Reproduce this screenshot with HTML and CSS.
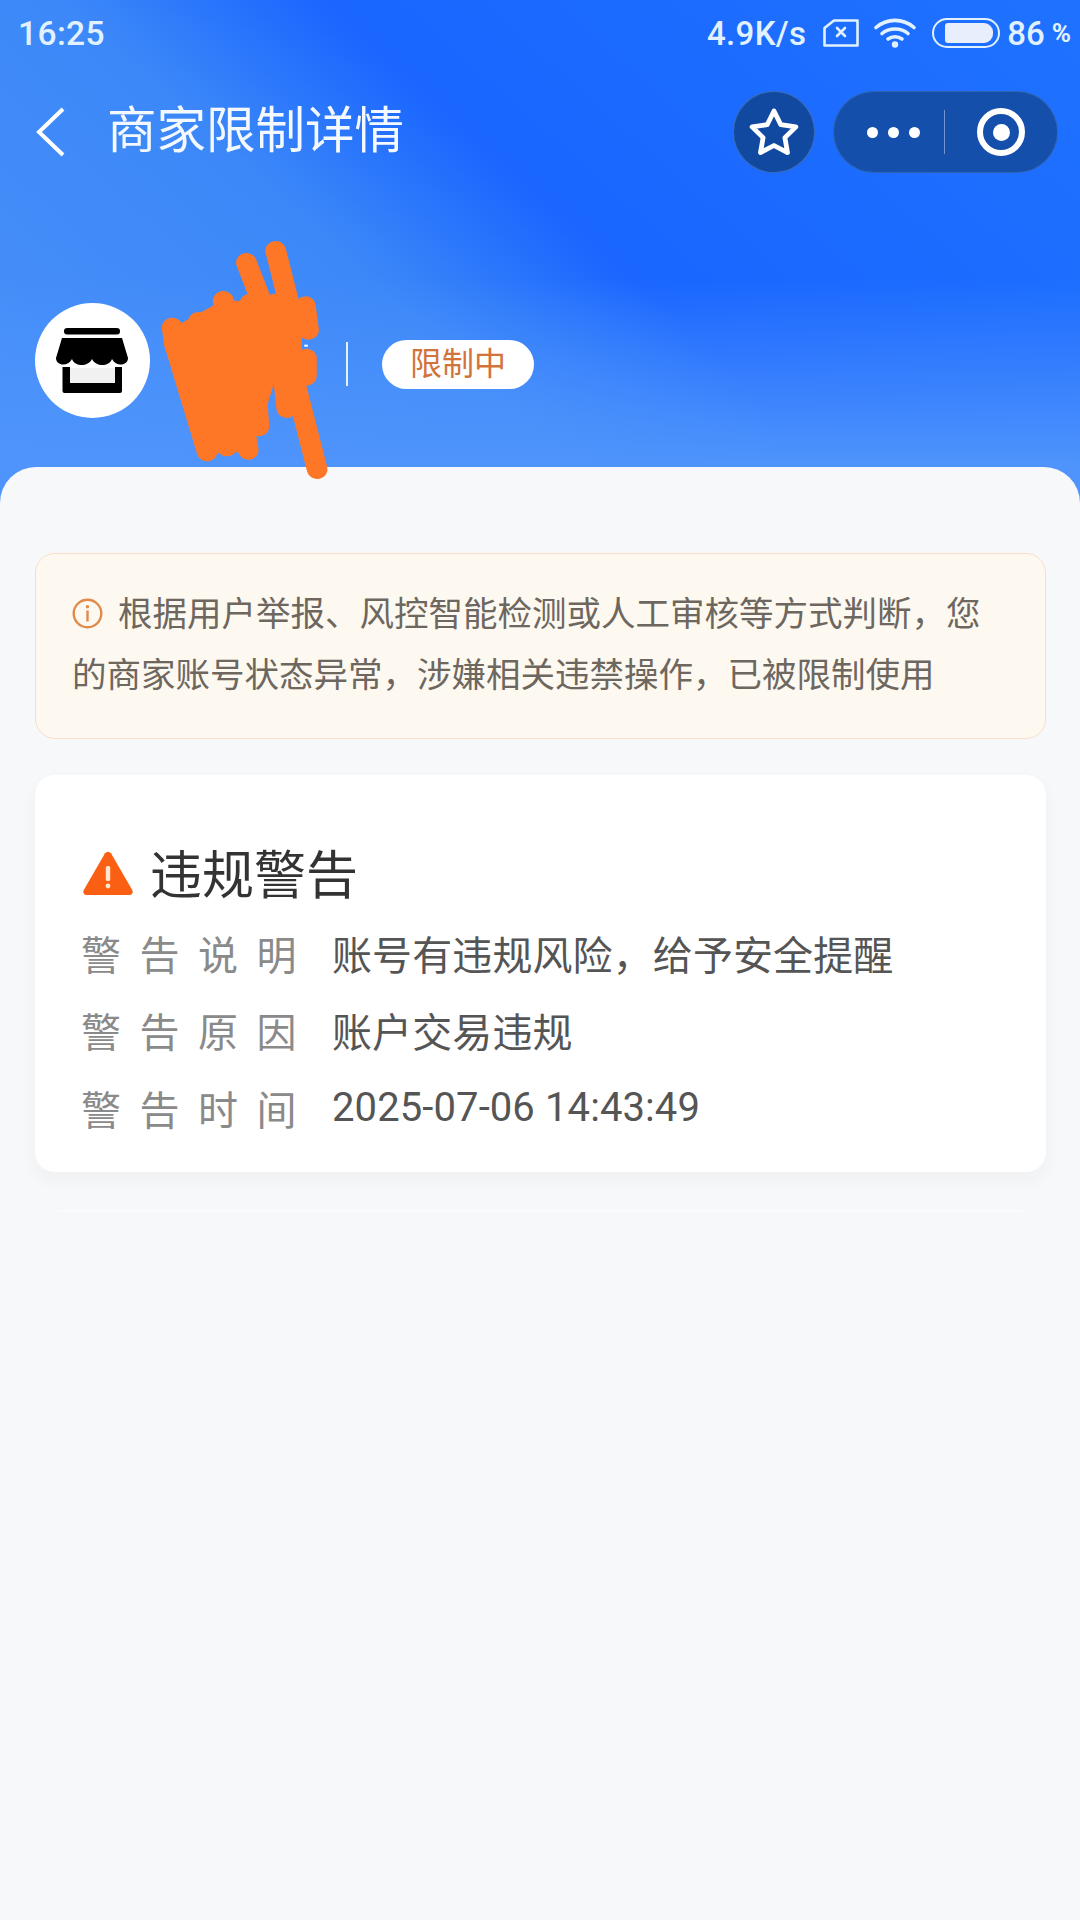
FILE: index.html
```html
<!DOCTYPE html>
<html lang="zh-CN">
<head>
    <meta charset="UTF-8">
    <meta name="viewport" content="width=device-width, initial-scale=1.0">
    <title>商家限制详情</title>
    <link rel="stylesheet" href="styles.css">
</head>
<body>
    <div class="page">
        <div class="top">
            <!-- 状态栏 -->
            <div class="status-bar">
                <div class="time">16:25</div>
                <div class="status-right">
                    <span class="speed">4.9K/s</span>
                    <svg class="sim" width="36" height="28" viewBox="0 0 36 28">
                        <path d="M11 1.5H34.5V26.5H1.5V9Z" fill="none" stroke="#e2f1ff" stroke-width="2.6" stroke-linejoin="round"/>
                        <path d="M14 9L22 17M22 9L14 17" stroke="#e2f1ff" stroke-width="2.6" stroke-linecap="round"/>
                    </svg>
                    <svg class="wifi" width="42" height="30" viewBox="0 0 42 30">
                        <path d="M2 9.5C13 0 29 0 40 9.5" fill="none" stroke="#e2f1ff" stroke-width="3.6" stroke-linecap="round"/>
                        <path d="M8 15.5C15 9.5 27 9.5 34 15.5" fill="none" stroke="#e2f1ff" stroke-width="3.6" stroke-linecap="round"/>
                        <path d="M14 21C18 18 24 18 28 21" fill="none" stroke="#e2f1ff" stroke-width="3.6" stroke-linecap="round"/>
                        <circle cx="21" cy="26.5" r="3.2" fill="#e2f1ff"/>
                    </svg>
                    <div class="battery"><div class="battery-fill"></div></div>
                    <span class="percent">86</span>
                    <span class="percent-sign">%</span>
                </div>
            </div>

            <!-- 导航 -->
            <div class="nav">
                <svg class="back" width="30" height="50" viewBox="0 0 30 50">
                    <path d="M27 2L3 25L27 48" fill="none" stroke="#fff" stroke-width="4"/>
                </svg>
                <div class="nav-title">商家限制详情</div>
                <div class="star-btn">
                    <svg width="54" height="54" viewBox="-27 -29 54 54">
                        <polygon points="0,-23 6.8,-9.3 21.9,-7.1 10.9,3.6 13.5,18.6 0,11.5 -13.5,18.6 -10.9,3.6 -21.9,-7.1 -6.8,-9.3" fill="none" stroke="#fff" stroke-width="4.8" stroke-linejoin="round"/>
                    </svg>
                </div>
                <div class="capsule">
                    <div class="dots"><span></span><span></span><span></span></div>
                    <div class="capsule-line"></div>
                    <div class="target"><div class="target-dot"></div></div>
                </div>
            </div>

            <!-- 商家信息 -->
            <div class="store-row">
                <div class="avatar">
                    <svg width="115" height="115" viewBox="35 303 115 115">
                        <rect x="64" y="328" width="56" height="6.5" rx="3.2" fill="#000"/>
                        <path d="M62 338H122L128 358C128 366 116 367 112 359C109 367 96 367 92 359C88 367 75 367 72 359C68 367 56 366 56 358Z" fill="#000"/>
                        <path d="M62.5 367H70V383H115V367H122V391Q122 393 120 393H64.5Q62.5 393 62.5 391Z" fill="#000"/>
                        <rect x="70" y="368" width="45" height="15" fill="#f1f1f1"/>
                    </svg>
                </div>
                <div class="store-name"></div>
                <div class="store-line"></div>
                <div class="store-tag">限制中</div>
            </div>
        </div>

        <div class="sheet">
            <div class="notice">
                <svg class="notice-icon" width="31" height="31" viewBox="0 0 31 31">
                    <circle cx="15.5" cy="15.5" r="13.8" fill="none" stroke="#e08a4c" stroke-width="2.4"/>
                    <circle cx="15.5" cy="8.8" r="1.7" fill="#e08a4c"/>
                    <rect x="14.3" y="12.5" width="2.4" height="11" fill="#e08a4c"/>
                </svg>根据用户举报、风控智能检测或人工审核等方式判断，您的商家账号状态异常，涉嫌相关违禁操作，已被限制使用
            </div>

            <div class="card">
                <div class="card-title">
                    <svg width="50" height="44" viewBox="0 0 50 44">
                        <path d="M22 2.2Q25 -0.8 28 2.2L49.5 39.5Q50.5 44 46 44H4Q-0.5 44 0.5 39.5Z" fill="#fa5f14"/>
                        <rect x="22.8" y="15" width="4.4" height="15" rx="1.6" fill="#ffe6cf"/>
                        <circle cx="25" cy="35" r="2.4" fill="#ffe6cf"/>
                    </svg>
                    <span>违规警告</span>
                </div>
                <div class="info-row">
                    <div class="info-label">警告说明</div>
                    <div class="info-value">账号有违规风险，给予安全提醒</div>
                </div>
                <div class="info-row">
                    <div class="info-label">警告原因</div>
                    <div class="info-value">账户交易违规</div>
                </div>
                <div class="info-row">
                    <div class="info-label">警告时间</div>
                    <div class="info-value">2025-07-06 14:43:49</div>
                </div>
            </div>
            <div class="card-foot"></div>
        </div>

        <!-- 涂抹遮挡 -->
        <svg class="scribble" width="560" height="260" viewBox="0 0 1568 780" preserveAspectRatio="none">
            <polygon points="490,290 625,210 845,225 845,440 770,450 730,590 695,665 580,670" fill="#fd7726"/>
            <g fill="none" stroke="#fd7726" stroke-width="58" stroke-linecap="round">
                <path d="M772 62L828 300"/>
                <path d="M690 98L745 250"/>
                <path d="M812 400L888 718"/>
                <path d="M482 292L488 340L580 665"/>
                <path d="M555 275L635 650"/>
                <path d="M625 212L695 660"/>
                <path d="M700 220L725 590"/>
                <path d="M770 220L803 535"/>
                <path d="M855 228L864 300"/>
                <path d="M858 385L858 438"/>
            </g>
            <rect x="852" y="344" width="10" height="6" fill="#fff"/>
        </svg>
    </div>
</body>
</html>
```

FILE: styles.css
```css
body {
    margin: 0;
    background-color: #f7f8f9;
    font-family: Roboto, "Noto Sans CJK SC", sans-serif;
}
.page {
    position: relative;
    height: 1920px;
    overflow: hidden;
    background-color: #f7f8f9;
}
.top {
    height: 467px;
    margin-bottom: -40px;
    padding-bottom: 40px;
    background:
        linear-gradient(to bottom, rgba(79, 148, 252, 0) 55%, #4f94fc 92%),
        linear-gradient(222deg, #1f72ff 0%, #1a66ff 46%, #3c88f8 62%, #4a91fa 100%);
}

/* 状态栏 */
.status-bar {
    height: 66px;
    display: flex;
    justify-content: space-between;
    align-items: center;
    padding: 0 9px 0 18px;
    color: #e2f1ff;
    font-weight: 500;
}
.time {
    font-size: 33.5px;
    letter-spacing: 0.4px;
}
.status-right {
    display: flex;
    align-items: center;
}
.speed {
    font-size: 33px;
    letter-spacing: 0.3px;
}
.sim {
    margin-left: 17px;
}
.wifi {
    margin-left: 15px;
}
.battery {
    width: 68px;
    height: 30px;
    box-sizing: border-box;
    margin-left: 16px;
    padding: 3px;
    border: 2.6px solid #e2f1ff;
    border-radius: 15px;
}
.battery-fill {
    width: 48px;
    height: 100%;
    margin-left: 8px;
    background-color: #e8eefc;
    border-radius: 3px 9px 9px 3px;
}
.percent {
    margin-left: 7px;
    font-size: 33px;
}
.percent-sign {
    margin-left: 7px;
    font-size: 26px;
    font-weight: 700;
}

/* 导航 */
.nav {
    display: flex;
    align-items: center;
    height: 82px;
    margin-top: 25px;
    padding: 0 22px 0 36px;
}
.back {
    margin-right: 41px;
}
.nav-title {
    flex: 1;
    font-size: 49.5px;
    line-height: 76px;
    margin-bottom: 2px;
    color: #f4f9ff;
}
.star-btn {
    width: 82px;
    height: 82px;
    display: flex;
    justify-content: center;
    align-items: center;
    margin-right: 18px;
    box-sizing: border-box;
    background-color: #10499f;
    border: 1px solid rgba(255, 255, 255, 0.18);
    border-radius: 50%;
}
.capsule {
    width: 225px;
    height: 82px;
    display: flex;
    align-items: center;
    box-sizing: border-box;
    background-color: #134fab;
    border: 1px solid rgba(255, 255, 255, 0.12);
    border-radius: 41px;
}
.dots {
    display: flex;
    gap: 10px;
    width: 110px;
    justify-content: center;
    padding-left: 8px;
    box-sizing: border-box;
}
.dots span {
    width: 11px;
    height: 11px;
    background-color: #fff;
    border-radius: 50%;
}
.capsule-line {
    width: 1px;
    height: 44px;
    background-color: rgba(255, 255, 255, 0.4);
}
.target {
    width: 48px;
    height: 48px;
    display: flex;
    justify-content: center;
    align-items: center;
    margin-left: 32px;
    box-sizing: border-box;
    border: 6px solid #fff;
    border-radius: 50%;
}
.target-dot {
    width: 17px;
    height: 17px;
    background-color: #fff;
    border-radius: 50%;
}

/* 商家信息 */
.store-row {
    display: flex;
    align-items: center;
    margin-top: 130px;
    padding-left: 35px;
}
.avatar {
    width: 115px;
    height: 115px;
    background-color: #fff;
    border-radius: 50%;
}
.store-name {
    width: 196px;
}
.store-line {
    width: 2px;
    height: 44px;
    margin-top: 6px;
    background-color: #e6f1ff;
}
.store-tag {
    width: 152px;
    height: 49px;
    margin-top: 7px;
    margin-left: 34px;
    text-align: center;
    line-height: 49px;
    font-size: 32px;
    color: #d2733a;
    background-color: #fff;
    border-radius: 25px;
}

/* 内容区 */
.sheet {
    position: relative;
    padding: 86px 34px 0 35px;
    background-color: #f7f8f9;
    border-radius: 36px 36px 0 0;
    height: 1453px;
    box-sizing: border-box;
}
.notice {
    height: 186px;
    box-sizing: border-box;
    padding: 30px 36px 0;
    font-size: 34.5px;
    line-height: 61px;
    color: #6d6760;
    background-color: #fef9f0;
    border: 1.5px solid #fbdcc8;
    border-radius: 20px;
}
.notice-icon {
    margin-right: 15px;
    vertical-align: -3px;
}
.card {
    margin-top: 36px;
    padding: 66px 48px 25px;
    background-color: #fff;
    border-radius: 20px;
    box-shadow: 0 8px 18px rgba(30, 40, 60, 0.04);
}
.card-title {
    display: flex;
    align-items: center;
    gap: 17px;
    height: 60px;
    margin-bottom: 13px;
    font-size: 52px;
    color: #333;
}
.card-title svg {
    margin-top: 3px;
}
.info-row {
    display: flex;
    align-items: center;
    height: 77.5px;
    margin-left: -2px;
    font-size: 40px;
}
.info-label {
    width: 251px;
    letter-spacing: 18.5px;
    color: #8a8a8a;
}
.info-value {
    letter-spacing: 0.1px;
    color: #555;
}
.card-foot {
    height: 2px;
    margin: 38px 24px 0 24px;
    background-color: #fbfbfc;
}
.scribble {
    position: absolute;
    left: 0;
    top: 230px;
}
```
